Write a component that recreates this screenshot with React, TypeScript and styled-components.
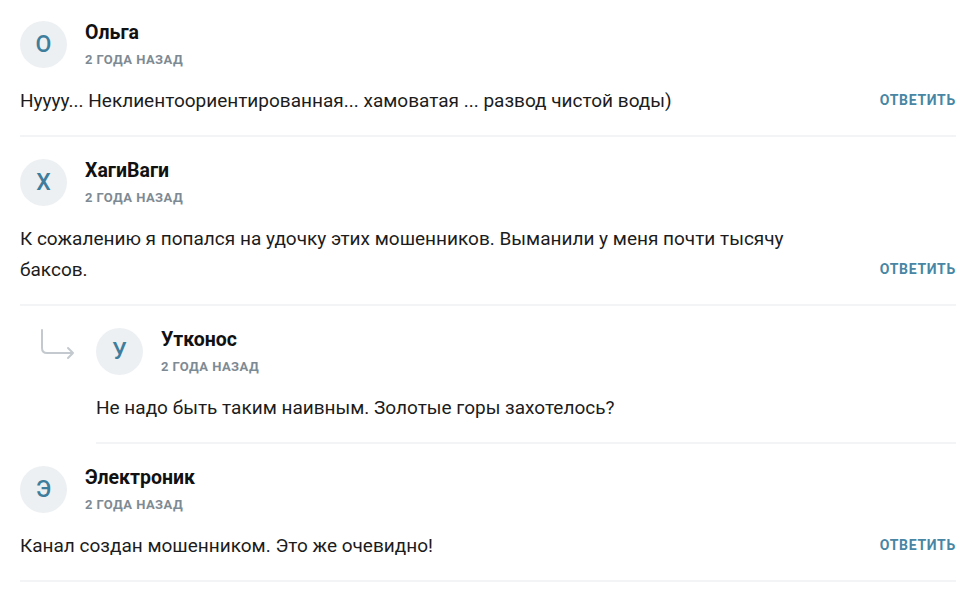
import React from "react";
import styled, { createGlobalStyle } from "styled-components";

const GlobalStyle = createGlobalStyle`
  html, body {
    margin: 0;
    padding: 0;
    background: #fff;
  }
  body {
    font-family: Roboto, "Noto Sans", "Liberation Sans", sans-serif;
    color: #1c1c1c;
    -webkit-font-smoothing: antialiased;
  }
`;

const List = styled.section`
  padding: 0 18px 0 20px;
  margin-top: -1px;
`;

const Thread = styled.div`
  display: flex;
`;

const ArrowCell = styled.div`
  flex: 0 0 76px;
  padding: 22px 0 0 20px;
  box-sizing: border-box;
  color: #c3c9ce;
`;

const Item = styled.article`
  flex: 1;
  padding: 22px 0 19px;
  border-bottom: 2px solid #f3f4f5;
`;

const Header = styled.header`
  display: flex;
  align-items: center;
  gap: 18px;
`;

const Avatar = styled.div`
  width: 47px;
  height: 47px;
  border-radius: 50%;
  background: #edf0f3;
  color: #3e7d9b;
  display: flex;
  align-items: center;
  justify-content: center;
  font-size: 23px;
  font-weight: 500;
  flex: none;
`;

const Meta = styled.div`
  display: flex;
  flex-direction: column;
`;

const Name = styled.div`
  font-size: 19.5px;
  font-weight: 700;
  line-height: 24px;
  color: #111;
`;

const Time = styled.div`
  margin-top: 7px;
  font-size: 13px;
  font-weight: 700;
  line-height: 16px;
  letter-spacing: 0.45px;
  text-transform: uppercase;
  color: #7e8a93;
`;

const Body = styled.div`
  display: flex;
  align-items: flex-end;
  gap: 24px;
  margin-top: 17px;
`;

const Text = styled.p`
  flex: 1;
  margin: 0;
  font-size: 19px;
  line-height: 31px;
  color: #1c1c1c;
`;

const ReplyButton = styled.button`
  border: 0;
  background: none;
  padding: 0;
  font-family: inherit;
  font-size: 14px;
  font-weight: 700;
  letter-spacing: 0.7px;
  line-height: 31px;
  text-transform: uppercase;
  color: #4886a4;
  cursor: pointer;
`;

type CommentData = {
  name: string;
  text: string;
  reply?: boolean;
};

const comments: CommentData[] = [
  {
    name: "Ольга",
    text: "Нуууу... Неклиентоориентированная... хамоватая ... развод чистой воды)",
  },
  {
    name: "ХагиВаги",
    text: "К сожалению я попался на удочку этих мошенников. Выманили у меня почти тысячу баксов.",
  },
  {
    name: "Утконос",
    text: "Не надо быть таким наивным. Золотые горы захотелось?",
    reply: true,
  },
  {
    name: "Электроник",
    text: "Канал создан мошенником. Это же очевидно!",
  },
];

function ReplyArrow() {
  return (
    <svg width="36" height="32" viewBox="0 0 36 32" fill="none">
      <path
        d="M2 2 V20 Q2 25 7 25 H33 M28 20 L33 25 L28 30"
        stroke="currentColor"
        strokeWidth="2"
        strokeLinecap="round"
        strokeLinejoin="round"
      />
    </svg>
  );
}

function Comment({ name, text, reply }: CommentData) {
  return (
    <Item>
      <Header>
        <Avatar>{name[0]}</Avatar>
        <Meta>
          <Name>{name}</Name>
          <Time>2 года назад</Time>
        </Meta>
      </Header>
      <Body>
        <Text>{text}</Text>
        {!reply && <ReplyButton>Ответить</ReplyButton>}
      </Body>
    </Item>
  );
}

export default function App() {
  return (
    <>
      <GlobalStyle />
      <List>
        {comments.map((c) => (
          <Thread key={c.name}>
            {c.reply && (
              <ArrowCell>
                <ReplyArrow />
              </ArrowCell>
            )}
            <Comment {...c} />
          </Thread>
        ))}
      </List>
    </>
  );
}
